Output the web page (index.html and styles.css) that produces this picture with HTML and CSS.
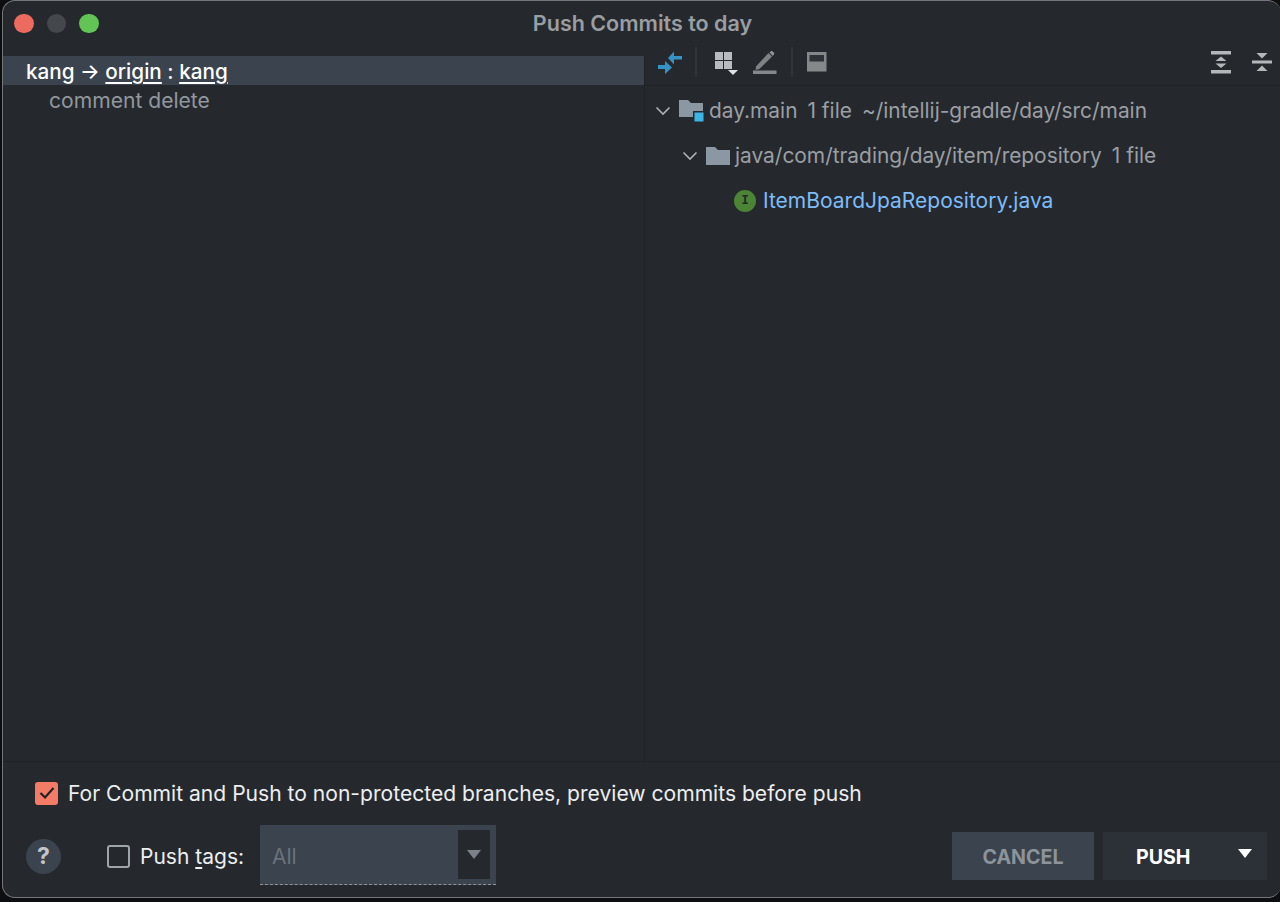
FILE: index.html
```html
<!DOCTYPE html>
<html lang="en">
<head>
<meta charset="utf-8">
<title>Push Commits to day</title>
<link rel="stylesheet" href="styles.css">
</head>
<body>
<div class="window">
  <header class="titlebar">
    <div class="lights">
      <span class="light red"></span><span class="light grey"></span><span class="light green"></span>
    </div>
    <div class="title">Push Commits to day</div>
  </header>
  <main class="panes">
    <section class="left">
      <div class="branch-row">kang <span class="arrow">→</span> <u>origin</u> : <u>kang</u></div>
      <div class="commit-row">comment delete</div>
    </section>
    <section class="right">
      <div class="toolbar">
        <svg class="tool" width="26" height="26" viewBox="0 0 26 26"><path d="M11 9 17 2.500V7h8v3.500h-8v5zM1 16h7v-4l7 6.500-7 6.500v-5H1z" fill="#3592c4"/></svg>
        <span class="sep first"></span>
        <svg class="tool group" width="26" height="26" viewBox="0 0 26 26"><g fill="#b8bcc0"><rect x="3" y="3" width="8" height="8"/><rect x="12" y="3" width="8" height="8"/><rect x="3" y="12" width="8" height="8"/><rect x="12" y="12" width="8" height="8"/></g><path d="M16 21h10l-5 5z" fill="#dfe1e3"/></svg>
        <svg class="tool edit" width="26" height="26" viewBox="0 0 26 26"><path d="M3 19.500 15.500 6l3.600 3.400L6.400 22l-3.800 1z" fill="#7f8285" transform="translate(0 -2)"/><path d="M16.500 3.600l1.400-1.400c.5-.4 1-.4 1.500 0l1.700 1.600c.4.500.4 1 0 1.500L19.800 7z" fill="#8f9295"/><rect x="0" y="21.500" width="23.500" height="3.500" fill="#85888b"/></svg>
        <span class="sep second"></span>
        <svg class="tool" width="22" height="22" viewBox="0 0 22 22"><rect x="1" y="1" width="19.500" height="19.500" fill="#85888b"/><rect x="3.500" y="4" width="14.500" height="6.500" fill="#2f3337"/></svg>
        <span class="spacer"></span>
        <svg class="tool" width="22" height="24" viewBox="0 0 22 24"><g fill="#b4b7ba"><rect x="1" y="1" width="20" height="3.500"/><rect x="1" y="20" width="20" height="3.500"/><path d="M11 6.500l5.500 4.500H5.500zM11 18l5.500-4.500H5.500z"/></g></svg>
        <svg class="tool last" width="20" height="24" viewBox="0 0 20 24"><g fill="#b4b7ba"><rect y="10.500" width="20" height="3"/><path d="M10 8.500 4.500 3h11zM10 15.500l5.500 5.500h-11z"/></g></svg>
      </div>
      <div class="tree">
        <div class="row">
          <svg class="chev" width="16" height="10" viewBox="0 0 16 10"><path d="M1.500 1.500 8 8l6.500-6.500" fill="none" stroke="#aeb1b4" stroke-width="1.600"/></svg>
          <svg class="folder" width="26" height="24" viewBox="0 0 26 24"><path d="M0 1h9l3 3h12v14H0z" fill="#8b98a3"/><rect x="14" y="12" width="11" height="11" fill="#25292e"/><rect x="15.500" y="13.500" width="9" height="9" fill="#3cb4e6"/></svg>
          <span class="name">day.main</span><span class="meta">1 file</span><span class="meta">~/intellij-gradle/day/src/main</span>
        </div>
        <div class="row level2">
          <svg class="chev" width="16" height="10" viewBox="0 0 16 10"><path d="M1.500 1.500 8 8l6.500-6.500" fill="none" stroke="#aeb1b4" stroke-width="1.600"/></svg>
          <svg class="folder small" width="24" height="20" viewBox="0 0 24 20"><path d="M0 1h9l3 3h12v15H0z" fill="#8b98a3"/></svg>
          <span class="name">java/com/trading/day/item/repository</span><span class="meta">1 file</span>
        </div>
        <div class="row level3">
          <span class="badge">I</span>
          <span class="file">ItemBoardJpaRepository.java</span>
        </div>
      </div>
    </section>
  </main>
  <footer class="footer">
    <label class="preview">
      <span class="check on"><svg width="16" height="14" viewBox="0 0 16 14"><path d="M1.500 7 6 11.500 14.500 2" fill="none" stroke="#1f2226" stroke-width="2.200"/></svg></span>
      <span>For Commit and Push to non-protected branches, preview commits before push</span>
    </label>
    <div class="actions">
      <span class="help">?</span>
      <label class="tags"><span class="check"></span><span>Push <u>t</u>ags:</span></label>
      <div class="select">
        <span class="select-value">All</span>
        <span class="select-btn"><i class="tri dim"></i></span>
      </div>
      <span class="spacer"></span>
      <button class="btn cancel">CANCEL</button>
      <button class="btn push"><span class="push-label">PUSH</span><i class="tri bright"></i></button>
    </div>
  </footer>
</div>
</body>
</html>
```
FILE: styles.css
```css
* { box-sizing: border-box; }
html, body { margin: 0; height: 100%; background: #0d0e10; }
body { font-family: "Inter", "Liberation Sans", sans-serif; font-size: 21px; overflow: hidden; }
.window {
  width: 1279px; height: 898px; margin-left: 2px;
  background: #25292e; border: 1px solid #74777a; border-right: 0;
  border-radius: 13px;
  display: flex; flex-direction: column; overflow: hidden;
}
.titlebar { height: 55px; flex: none; display: flex; align-items: center; position: relative; padding-left: 11px; padding-bottom: 10px; }
.lights { display: flex; gap: 13px; }
.light { width: 19.500px; height: 19.500px; border-radius: 50%; }
.red { background: #ec6a5e; }
.grey { background: #44474b; }
.green { background: #61c454; }
.title { position: absolute; left: 0; width: 1279px; top: 9px; text-align: center; color: #9a9da1; font-weight: 600; font-size: 21.500px; line-height: 26px; }
.panes { flex: 1; display: flex; min-height: 0; border-bottom: 1px solid #1e2226; }
.left { width: 642px; flex: none; border-right: 1px solid #1e2226; }
.branch-row { height: 29px; line-height: 31px; background: #3a434e; color: #fff; padding-left: 23px; font-weight: 500; font-size: 20.700px; white-space: pre-wrap; }
.branch-row u { text-underline-offset: 3px; }
.commit-row { height: 30px; line-height: 31px; color: #92979e; padding-left: 46px; font-size: 21.100px; }
.right { flex: 1; display: flex; flex-direction: column; min-width: 0; margin-top: -12px; }
.toolbar { height: 42px; display: flex; align-items: center; border-bottom: 1px solid #1e2226; padding: 0 9px 6px 12px; flex: none; }
.tool { flex: none; }
.sep { width: 2px; height: 30px; background: #30353a; flex: none; }
.sep.first { margin: 0 15px 0 12px; }
.sep.second { margin: 0 13px 0 12px; }
.edit { margin-left: 15px; }
.spacer { flex: 1; }
.last { margin-left: 20px; }
.tree { flex: 1; padding-top: 2px; }
.row { height: 45px; display: flex; align-items: center; color: #9b9fa4; white-space: nowrap; padding-left: 10px; font-size: 20.900px; }
.chev { flex: none; margin-right: 8px; }
.folder { flex: none; margin-right: 4px; }
.folder.small { margin-right: 5px; }
.meta { margin-left: 10px; }
.level2 { padding-left: 37px; }
.level3 { padding-left: 89px; font-size: 21px; }
.badge { width: 22px; height: 22px; border-radius: 50%; background: #4a8434; color: #23272b; font: 700 12px "Liberation Mono", monospace; display: flex; align-items: center; justify-content: center; flex: none; margin-right: 7px; }
.file { color: #7dbcf8; }
.footer { height: 135px; flex: none; padding: 18px 14px 0 23px; color: #eceef0; }
.preview { display: flex; align-items: center; gap: 10px; height: 26px; padding-left: 9px; font-size: 21.080px; }
.check { width: 23px; height: 23px; border: 2px solid #9fa4a9; border-radius: 3px; display: inline-flex; align-items: center; justify-content: center; flex: none; }
.check.on { background: #f47c67; border-color: #f47c67; }
.actions { display: flex; align-items: center; margin-top: 20px; height: 60px; }
.help { width: 35px; height: 35px; border-radius: 50%; background: #3a434e; color: #c3c6c9; font-weight: 700; font-size: 23px; display: flex; align-items: center; justify-content: center; flex: none; }
.tags { display: flex; align-items: center; gap: 10px; margin-left: 46px; }
.tags u { text-underline-offset: 3px; }
.select { width: 236px; height: 60px; margin-left: 16px; margin-bottom: 2px; background: #3a434e; border-bottom: 1px dashed #8f949a; display: flex; align-items: center; padding: 0 6px 0 12px; }
.select-value { flex: 1; color: #6a717a; padding-top: 3px; }
.select-btn { width: 32px; height: 49px; background: #25292e; display: flex; align-items: center; justify-content: center; }
.tri { width: 0; height: 0; border-style: solid; border-color: transparent; border-width: 9px 7.500px 0; display: block; }
.tri.dim { border-top-color: #7c828a; }
.tri.bright { border-top-color: #fff; }
.btn { height: 48px; border: 0; font-family: inherit; font-weight: 700; font-size: 19.600px; padding: 1px 0 0; flex: none; }
.cancel { width: 142px; background: #3a434e; color: #8d939a; }
.push { width: 164px; margin-left: 9px; background: #2c3138; color: #fff; display: flex; align-items: center; padding-left: 33px; }
.push-label { flex: 1; text-align: left; }
.push .tri { margin: -6px 15px 0 0; }
```
